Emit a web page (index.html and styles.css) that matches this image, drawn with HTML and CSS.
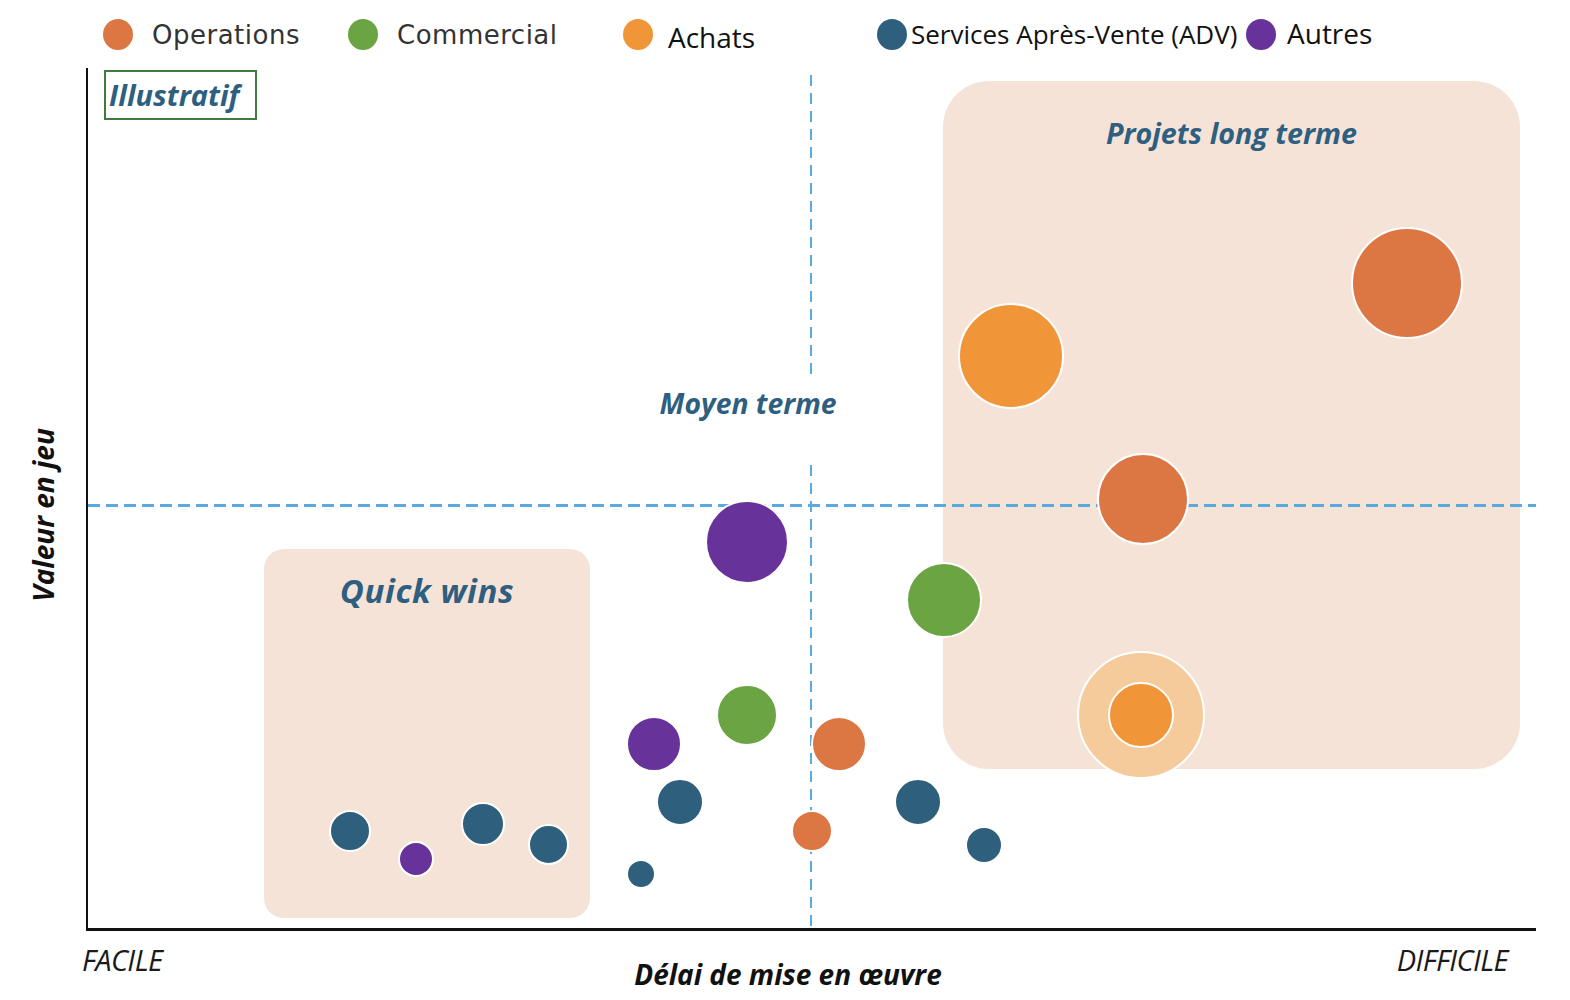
FILE: index.html
```html
<!DOCTYPE html>
<html lang="fr">
<head>
<meta charset="utf-8">
<title>Matrice valeur / délai</title>
<link rel="stylesheet" href="styles.css">
</head>
<body>
<div class="page">
  <div class="legend">
    <div class="leg leg-ops"><span class="dot c-ops"></span><span class="leg-text sans-a">Operations</span></div>
    <div class="leg leg-com"><span class="dot c-com"></span><span class="leg-text sans-a">Commercial</span></div>
    <div class="leg leg-ach"><span class="dot c-ach"></span><span class="leg-text sans-b lower">Achats</span></div>
    <div class="leg leg-adv"><span class="dot c-adv"></span><span class="leg-text sans-b small">Services Après-Vente (ADV)</span></div>
    <div class="leg leg-aut"><span class="dot c-aut"></span><span class="leg-text sans-b upper">Autres</span></div>
  </div>

  <div class="ylabel">Valeur en jeu</div>

  <div class="plot">
    <div class="zone zone-long"><div class="zone-title">Projets long terme</div></div>
    <div class="zone zone-quick"><div class="zone-title big">Quick wins</div></div>

    <div class="vdash vdash-top"></div>
    <div class="vdash vdash-bottom"></div>
    <div class="hdash"></div>

    <div class="tag">Illustratif</div>
    <div class="mid-title">Moyen terme</div>

    <span class="bubble c-aut" style="--x:746.7;--y:542.3;--r:42"></span>
    <span class="bubble c-com" style="--x:944.3;--y:600;--r:38"></span>
    <span class="bubble c-com" style="--x:746.7;--y:715.3;--r:31"></span>
    <span class="bubble c-aut" style="--x:654;--y:744;--r:28"></span>
    <span class="bubble c-ops" style="--x:839;--y:744;--r:28"></span>
    <span class="bubble c-adv" style="--x:680;--y:801.7;--r:24"></span>
    <span class="bubble c-ops" style="--x:812;--y:830.7;--r:21"></span>
    <span class="bubble c-adv" style="--x:918;--y:801.7;--r:24"></span>
    <span class="bubble c-adv" style="--x:984.3;--y:844.7;--r:19"></span>
    <span class="bubble c-adv" style="--x:641;--y:874.3;--r:15"></span>
    <span class="bubble c-adv" style="--x:350.3;--y:830.7;--r:21"></span>
    <span class="bubble c-aut" style="--x:416;--y:859.3;--r:18"></span>
    <span class="bubble c-adv" style="--x:483;--y:824;--r:22"></span>
    <span class="bubble c-adv" style="--x:548.7;--y:844.7;--r:20.5"></span>
    <span class="bubble c-ach" style="--x:1010.5;--y:355.5;--r:53"></span>
    <span class="bubble c-ops" style="--x:1406.5;--y:283;--r:56"></span>
    <span class="bubble c-ops" style="--x:1142.5;--y:499;--r:46"></span>
    <span class="bubble c-ring" style="--x:1140.5;--y:715;--r:64"></span>
    <span class="bubble c-ach" style="--x:1140.5;--y:715;--r:33"></span>
  </div>

  <div class="xaxis">
    <span class="xend">FACILE</span>
    <span class="xtitle">Délai de mise en œuvre</span>
    <span class="xend right">DIFFICILE</span>
  </div>
</div>
</body>
</html>
```

FILE: styles.css
```css
* { box-sizing: border-box; }

html, body {
  margin: 0;
  padding: 0;
  background: #ffffff;
}

.page {
  position: relative;
  width: 1570px;
  height: 1000px;
  overflow: hidden;
  font-family: "Open Sans", "Noto Sans", sans-serif;
  color: #111;
}

/* ---------- legend ---------- */
.legend {
  display: flex;
  align-items: center;
  height: 68px;
  padding-left: 103px;
}

.leg {
  display: flex;
  align-items: center;
  flex: 0 0 auto;
}
.leg-ops { width: 245px; }
.leg-com { width: 275px; }
.leg-ach { width: 254px; }
.leg-adv { width: 369px; }

.dot {
  display: block;
  width: 30px;
  height: 31px;
  border-radius: 50%;
  flex: 0 0 auto;
}

.leg-ops .dot, .leg-com .dot { margin-right: 19px; }
.leg-ach .dot { margin-right: 15px; }
.leg-adv .dot { margin-right: 4px; }
.leg-aut .dot { margin-right: 11px; }

.leg-text { white-space: nowrap; }

.sans-a {
  font-family: "DejaVu Sans", "Noto Sans", sans-serif;
  font-size: 26px;
  letter-spacing: 0.5px;
  color: #333;
  position: relative;
  top: 1px;
}

.sans-b {
  font-family: "Open Sans", "Noto Sans", sans-serif;
  font-size: 28px;
  color: #111;
}
.sans-b.small { font-size: 26px; }
.sans-b.lower { position: relative; top: 3px; }
.sans-b.upper { position: relative; top: -1px; }

/* ---------- colours ---------- */
.c-ops { background: #dc7744; }
.c-com { background: #6aa443; }
.c-ach { background: #f09638; }
.c-adv { background: #2e607e; }
.c-aut { background: #67339a; }
.c-ring { background: #f6cb9c; }

/* ---------- y label ---------- */
.ylabel {
  position: absolute;
  left: 43px;
  top: 515px;
  transform: translate(-50%, -50%) rotate(-90deg);
  font-size: 28px;
  font-weight: 700;
  font-style: italic;
  white-space: nowrap;
  color: #111;
}

/* ---------- plot ---------- */
.plot {
  position: relative;
  margin-left: 86px;
  width: 1450px;
  height: 863px;
  border-left: 2px solid #111;
  border-bottom: 3px solid #111;
}

.zone {
  position: absolute;
  background: #f6e3d8;
  text-align: center;
  z-index: 0;
}
.zone-long {
  left: 855px;
  top: 13px;
  width: 577px;
  height: 688px;
  border-radius: 46px;
  padding-top: 32px;
}
.zone-quick {
  left: 176px;
  top: 481px;
  width: 326px;
  height: 369px;
  border-radius: 20px;
  padding-top: 19px;
}

.zone-title {
  font-size: 28.7px;
  line-height: 39px;
  font-weight: 700;
  font-style: italic;
  color: #2e5f80;
}
.zone-title.big {
  font-size: 33px;
  line-height: 45px;
  letter-spacing: 0.6px;
}

.vdash {
  position: absolute;
  left: 722px;
  width: 2px;
  background: repeating-linear-gradient(to bottom, #5aaae0 0 11px, transparent 11px 18px);
  z-index: 1;
}
.vdash-top { top: 7px; height: 302px; }
.vdash-bottom { top: 397px; height: 463px; }

.hdash {
  position: absolute;
  left: 0;
  top: 436px;
  width: 1448px;
  height: 2.5px;
  background: repeating-linear-gradient(to right, #5aaae0 0 12px, transparent 12px 18px);
  z-index: 1;
}

.tag {
  position: absolute;
  left: 16px;
  top: 2px;
  width: 153px;
  height: 50px;
  border: 2px solid #3f7a3f;
  padding-left: 3px;
  font-size: 29px;
  line-height: 46px;
  font-weight: 700;
  font-style: italic;
  color: #2e5f80;
  z-index: 3;
}

.mid-title {
  position: absolute;
  left: 540px;
  top: 316px;
  width: 240px;
  text-align: center;
  font-size: 28.3px;
  line-height: 39px;
  font-weight: 700;
  font-style: italic;
  color: #2e5f80;
  z-index: 3;
}

.bubble {
  position: absolute;
  left: calc((var(--x) - var(--r) - 88) * 1px);
  top: calc((var(--y) - var(--r) - 68) * 1px);
  width: calc(var(--r) * 2px);
  height: calc(var(--r) * 2px);
  border-radius: 50%;
  border: 2px solid #fff;
  z-index: 2;
}

/* ---------- x axis labels ---------- */
.xaxis {
  display: grid;
  grid-template-columns: 1fr auto 1fr;
  align-items: start;
  padding: 10px 62px 0 82px;
}

.xend {
  font-size: 29px;
  font-style: italic;
  letter-spacing: -0.6px;
  line-height: 38px;
  color: #1a1a1a;
  justify-self: start;
}
.xend.right { justify-self: end; }

.xtitle {
  font-size: 28px;
  font-weight: 700;
  font-style: italic;
  line-height: 38px;
  padding-top: 14px;
  margin-right: 14px;
  color: #111;
  white-space: nowrap;
}
```
